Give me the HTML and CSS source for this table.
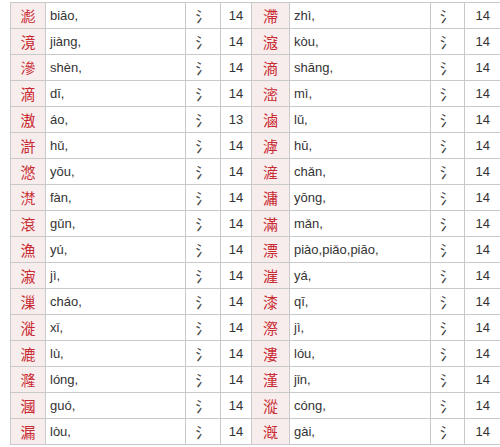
FILE: index.html
```html
<!DOCTYPE html>
<html lang="zh">
<head>
<meta charset="utf-8">
<link rel="stylesheet" href="styles.css">
</head>
<body>
<table class="tbl">
<colgroup>
<col class="c-ch"><col class="c-py"><col class="c-rad"><col class="c-num">
<col class="c-ch2"><col class="c-py2"><col class="c-rad2"><col class="c-num2">
</colgroup>
<tbody>
<tr><td class="ch">滮</td><td class="py">biāo,</td><td class="rad">氵</td><td class="num">14</td><td class="ch">滯</td><td class="py">zhì,</td><td class="rad">氵</td><td class="num">14</td></tr>
<tr><td class="ch">滰</td><td class="py">jiàng,</td><td class="rad">氵</td><td class="num">14</td><td class="ch">滱</td><td class="py">kòu,</td><td class="rad">氵</td><td class="num">14</td></tr>
<tr><td class="ch">滲</td><td class="py">shèn,</td><td class="rad">氵</td><td class="num">14</td><td class="ch">滳</td><td class="py">shāng,</td><td class="rad">氵</td><td class="num">14</td></tr>
<tr><td class="ch">滴</td><td class="py">dī,</td><td class="rad">氵</td><td class="num">14</td><td class="ch">滵</td><td class="py">mì,</td><td class="rad">氵</td><td class="num">14</td></tr>
<tr><td class="ch">滶</td><td class="py">áo,</td><td class="rad">氵</td><td class="num">13</td><td class="ch">滷</td><td class="py">lǔ,</td><td class="rad">氵</td><td class="num">14</td></tr>
<tr><td class="ch">滸</td><td class="py">hǔ,</td><td class="rad">氵</td><td class="num">14</td><td class="ch">滹</td><td class="py">hū,</td><td class="rad">氵</td><td class="num">14</td></tr>
<tr><td class="ch">滺</td><td class="py">yōu,</td><td class="rad">氵</td><td class="num">14</td><td class="ch">滻</td><td class="py">chǎn,</td><td class="rad">氵</td><td class="num">14</td></tr>
<tr><td class="ch">滼</td><td class="py">fàn,</td><td class="rad">氵</td><td class="num">14</td><td class="ch">滽</td><td class="py">yōng,</td><td class="rad">氵</td><td class="num">14</td></tr>
<tr><td class="ch">滾</td><td class="py">gǔn,</td><td class="rad">氵</td><td class="num">14</td><td class="ch">滿</td><td class="py">mǎn,</td><td class="rad">氵</td><td class="num">14</td></tr>
<tr><td class="ch">漁</td><td class="py">yú,</td><td class="rad">氵</td><td class="num">14</td><td class="ch">漂</td><td class="py">piào,piǎo,piāo,</td><td class="rad">氵</td><td class="num">14</td></tr>
<tr><td class="ch">漃</td><td class="py">jì,</td><td class="rad">氵</td><td class="num">14</td><td class="ch">漄</td><td class="py">yá,</td><td class="rad">氵</td><td class="num">14</td></tr>
<tr><td class="ch">漅</td><td class="py">cháo,</td><td class="rad">氵</td><td class="num">14</td><td class="ch">漆</td><td class="py">qī,</td><td class="rad">氵</td><td class="num">14</td></tr>
<tr><td class="ch">漇</td><td class="py">xǐ,</td><td class="rad">氵</td><td class="num">14</td><td class="ch">漈</td><td class="py">jì,</td><td class="rad">氵</td><td class="num">14</td></tr>
<tr><td class="ch">漉</td><td class="py">lù,</td><td class="rad">氵</td><td class="num">14</td><td class="ch">漊</td><td class="py">lóu,</td><td class="rad">氵</td><td class="num">14</td></tr>
<tr><td class="ch">漋</td><td class="py">lóng,</td><td class="rad">氵</td><td class="num">14</td><td class="ch">漌</td><td class="py">jǐn,</td><td class="rad">氵</td><td class="num">14</td></tr>
<tr><td class="ch">漍</td><td class="py">guó,</td><td class="rad">氵</td><td class="num">14</td><td class="ch">漎</td><td class="py">cóng,</td><td class="rad">氵</td><td class="num">14</td></tr>
<tr><td class="ch">漏</td><td class="py">lòu,</td><td class="rad">氵</td><td class="num">14</td><td class="ch">漑</td><td class="py">gài,</td><td class="rad">氵</td><td class="num">14</td></tr>
</tbody>
</table>
</body>
</html>
```
FILE: styles.css
```css
html, body {
  margin: 0;
  padding: 0;
  background: #fff;
  overflow: hidden;
}
body {
  padding: 2px 0 0 10px;
  font-family: "Liberation Sans", Arial, "Noto Sans CJK SC", sans-serif;
  font-size: 13px;
  color: #333;
}
.tbl {
  border-collapse: collapse;
  table-layout: fixed;
  width: 490px;
}
.c-ch { width: 35px; }
.c-py { width: 140px; }
.c-rad { width: 35px; }
.c-num { width: 31px; }
.c-ch2 { width: 38px; }
.c-py2 { width: 141px; }
.c-rad2 { width: 34px; }
.c-num2 { width: 36px; }
.tbl td {
  border: 1px solid #c9c9c9;
  height: 25px;
  padding: 0;
  vertical-align: middle;
  white-space: nowrap;
  overflow: hidden;
}
.tbl td:last-child {
  border-right: none;
}
.tbl .ch {
  background: #f8eded;
  color: #c82a32;
  text-align: center;
  font-family: "Noto Sans CJK TC", "Noto Sans CJK SC", sans-serif;
  font-size: 15px;
  line-height: 25px;
}
.tbl .py {
  padding-left: 4px;
}
.tbl .rad {
  text-align: center;
  font-family: "Noto Sans CJK SC", sans-serif;
  font-size: 15px;
  color: #444;
}
.tbl .num {
  text-align: center;
}
```
